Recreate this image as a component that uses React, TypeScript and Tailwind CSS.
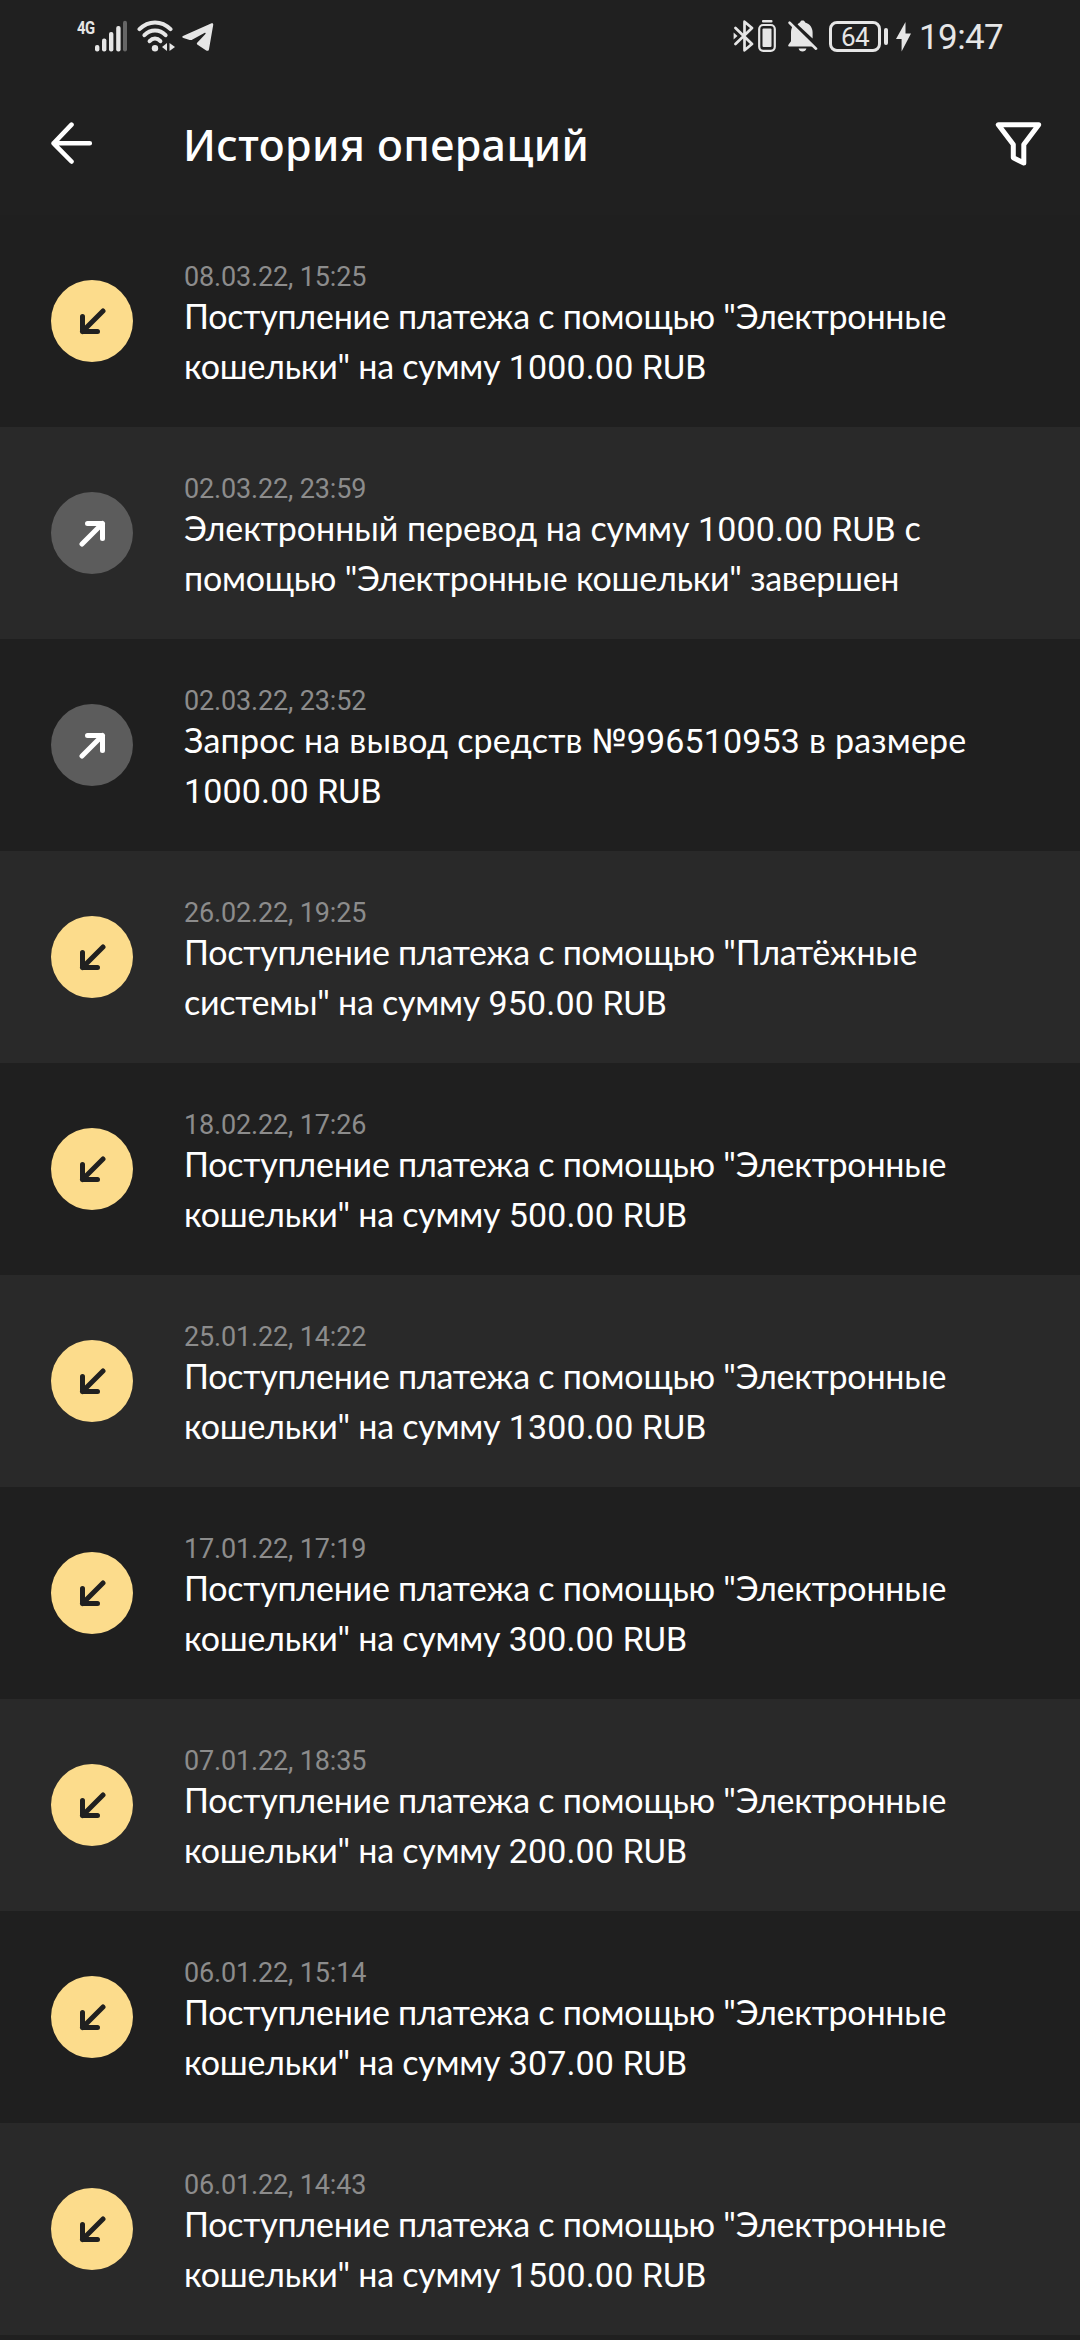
type Direction = 'in' | 'out';

interface Operation {
  date: string;
  lines: [string, string];
  direction: Direction;
  tracking?: string;
}

const OPERATIONS: Operation[] = [
  {
    date: '08.03.22, 15:25',
    lines: ['Поступление платежа с помощью "Электронные', 'кошельки" на сумму 1000.00 RUB'],
    direction: 'in',
  },
  {
    date: '02.03.22, 23:59',
    lines: ['Электронный перевод на сумму 1000.00 RUB с', 'помощью "Электронные кошельки" завершен'],
    direction: 'out',
    tracking: 'first:tracking-[-0.05px]',
  },
  {
    date: '02.03.22, 23:52',
    lines: ['Запрос на вывод средств №996510953 в размере', '1000.00 RUB'],
    direction: 'out',
    tracking: 'first:tracking-[0.2px]',
  },
  {
    date: '26.02.22, 19:25',
    lines: ['Поступление платежа с помощью "Платёжные', 'системы" на сумму 950.00 RUB'],
    direction: 'in',
  },
  {
    date: '18.02.22, 17:26',
    lines: ['Поступление платежа с помощью "Электронные', 'кошельки" на сумму 500.00 RUB'],
    direction: 'in',
  },
  {
    date: '25.01.22, 14:22',
    lines: ['Поступление платежа с помощью "Электронные', 'кошельки" на сумму 1300.00 RUB'],
    direction: 'in',
  },
  {
    date: '17.01.22, 17:19',
    lines: ['Поступление платежа с помощью "Электронные', 'кошельки" на сумму 300.00 RUB'],
    direction: 'in',
  },
  {
    date: '07.01.22, 18:35',
    lines: ['Поступление платежа с помощью "Электронные', 'кошельки" на сумму 200.00 RUB'],
    direction: 'in',
  },
  {
    date: '06.01.22, 15:14',
    lines: ['Поступление платежа с помощью "Электронные', 'кошельки" на сумму 307.00 RUB'],
    direction: 'in',
  },
  {
    date: '06.01.22, 14:43',
    lines: ['Поступление платежа с помощью "Электронные', 'кошельки" на сумму 1500.00 RUB'],
    direction: 'in',
  },
];

function SignalIcon() {
  return (
    <svg className="w-8 h-8 shrink-0" viewBox="0 0 32 32" fill="currentColor">
      <rect x="0" y="25" width="4.4" height="6.5" rx="2" />
      <rect x="7" y="18.5" width="4.4" height="13" rx="2" />
      <rect x="14" y="12" width="4.4" height="19.5" rx="2" />
      <rect x="21.2" y="6" width="4.4" height="25.5" rx="2" />
      <rect x="28" y="0.8" width="4" height="30.7" rx="2" fill="#666666" />
    </svg>
  );
}

function WifiIcon() {
  return (
    <svg className="w-[39px] h-8 shrink-0" viewBox="0 0 39 32" fill="none" stroke="currentColor" strokeWidth="4" strokeLinecap="round">
      <path d="M2.5 9.2C11.5 .2 24.5 .2 33.5 9.2" />
      <path d="M7.4 15.2c6-6.4 15.2-6.4 21.2 0" />
      <path d="M12.6 21.2c3.2-3.5 7.6-3.5 10.8 0" />
      <circle cx="18" cy="28.2" r="3.2" fill="currentColor" stroke="none" />
      <path d="M30 23v8l-5-4zM32.5 23v8l5.5-4z" fill="currentColor" stroke="none" />
    </svg>
  );
}

function TelegramIcon() {
  return (
    <svg className="w-8 h-[29px] shrink-0" viewBox="0 0 32 29" fill="currentColor">
      <path d="M1.5 12.8 29 .4c1.6-.6 2.4 0 2.2 1.600L27 26.200c-.3 1.700-1.400 2.100-2.800 1.200L15.600 21.800c-1-.8-1-1.400-.2-2.300l8-8.600c.7-1 0-1.600-1-.9L10.500 16.600c-1 .6-1.700.6-2.800.3L1.400 15c-1.600-.6-1.500-1.600.1-2.200z" />
    </svg>
  );
}

function BluetoothIcon() {
  return (
    <svg className="w-[22px] h-8 shrink-0" viewBox="0 0 22 32" fill="none" stroke="currentColor" strokeWidth="2.7" strokeLinejoin="round" strokeLinecap="round">
      <path d="M2.5 8 19 24l-7.5 6.3V1.7L19 8 2.5 24" />
      <path d="M.6 12.6 4.5 16 .6 19.4z" fill="currentColor" stroke="none" />
    </svg>
  );
}

function DeviceBatteryIcon() {
  return (
    <svg className="w-[18px] h-8 shrink-0" viewBox="0 0 18 32" fill="none">
      <rect x="4" y="0" width="10.5" height="2.4" rx="1" fill="currentColor" />
      <rect x="1.2" y="5" width="15.6" height="25.8" rx="4" stroke="currentColor" strokeWidth="2.2" />
      <rect x="4.5" y="8.6" width="9" height="18.4" rx="1" fill="currentColor" />
    </svg>
  );
}

function BellOffIcon() {
  return (
    <svg className="w-[30px] h-8 shrink-0" viewBox="0 0 30 32" fill="currentColor">
      <path d="M9.6 4.6C10.4 3.5 11 3 12 2.6 12.3 1 13.2.4 14.5.4S16.900 1 17.200 2.600C22 4 24.600 8 24.600 12.500V18.600z" />
      <path d="M4.5 6.2 25.5 26.6H1.600C0 26.600-.2 25.300.8 24.200l2.200-3V12.500C3 10 3.600 8 4.500 6.200z" />
      <path d="M10.6 28.6h7.8c-.4 2-1.900 3-3.900 3s-3.500-1-3.900-3z" />
      <path d="M1.6 2.7 28 28.7" stroke="currentColor" strokeWidth="2.6" strokeLinecap="round" />
    </svg>
  );
}

function BoltIcon() {
  return (
    <svg className="w-[15px] h-[30px] shrink-0" viewBox="0 0 15 30" fill="currentColor">
      <path d="M9.5 0v11.6H15L5.6 29.6V17H0z" />
    </svg>
  );
}

function StatusBar() {
  return (
    <div className="flex h-[72px] items-start justify-between px-[77px] pt-5 text-[#e6e6e6] font-['Roboto',sans-serif]">
      <div className="flex items-start">
        <span className="w-[18px] text-[19px] leading-[15px] font-bold tracking-[-0.5px]">
          <span className="inline-block origin-left scale-x-[0.78]">4G</span>
        </span>
        <SignalIcon />
        <div className="ml-[10px]"><WifiIcon /></div>
        <div className="ml-[6px] mt-[3px]"><TelegramIcon /></div>
      </div>
      <div className="flex items-start">
        <BluetoothIcon />
        <div className="ml-[3px]"><DeviceBatteryIcon /></div>
        <div className="ml-3"><BellOffIcon /></div>
        <div className="ml-[11px] mt-px flex h-[31px] w-[52px] items-center justify-center rounded-[8px] border-[3px] border-current text-[26px] leading-none tracking-[-0.5px]">
          64
        </div>
        <div className="ml-[3px] mt-2 h-[17px] w-1 rounded-full bg-current" />
        <div className="ml-2 mt-[2px]"><BoltIcon /></div>
        <span className="ml-[8px] w-[84px] text-[35px] leading-[36px] tracking-[-0.6px] whitespace-nowrap">19:47</span>
      </div>
    </div>
  );
}

function Header() {
  return (
    <header className="flex h-[143px] items-start pl-[51px] pr-[38px] text-white">
      <svg className="mt-[50px] w-[42px] h-[42px] shrink-0" viewBox="0 0 42 42" fill="none" stroke="currentColor" strokeWidth="4.6" strokeLinecap="round" strokeLinejoin="round">
        <path d="M20.5 2.7 2.6 21.3l17.9 18.2M2.6 21.3h36.2" />
      </svg>
      <h1 className="ml-[90px] mt-[43px] flex-1 text-[43px] leading-[60px] font-medium tracking-[0.4px] whitespace-nowrap font-['Noto_Sans',sans-serif]">История операций</h1>
      <svg className="mt-[49px] w-[47px] h-[45px] shrink-0" viewBox="0 0 47 45" fill="none" stroke="currentColor" strokeWidth="5" strokeLinejoin="round">
        <path d="M3.3 3.7h40.4L28.8 23.5v18.5L18.3 36.8V23.5z" />
      </svg>
    </header>
  );
}

function DirectionBadge({ direction }: { direction: Direction }) {
  const incoming = direction === 'in';

  return (
    <div className={`flex w-[82px] h-[82px] shrink-0 items-center justify-center rounded-full ${incoming ? 'bg-[#fcdc8c] text-[#202020]' : 'bg-[#5c5c5c] text-white'}`}>
      <svg className="w-[27px] h-[27px]" viewBox="0 0 27 27" fill="none" stroke="currentColor" strokeWidth="5" strokeLinecap="round" strokeLinejoin="round">
        <path d={incoming ? 'M24 3 3.5 23.5M3.5 8.5v15h15' : 'M3 24 23.5 3.5M8.5 3.5h15v15'} />
      </svg>
    </div>
  );
}

// Numbers and the currency code are set in Roboto, the rest of the line in Lato
function Line({ text, className = '' }: { text: string; className?: string }) {
  return (
    <span className={`block h-[50px] ${className}`}>
      {text.split(/(№?[\d.]+(?: RUB)?)/).map((part, i) =>
        i % 2 === 1 ? (
          <span key={i} className="font-['Roboto',sans-serif] leading-none tracking-[0.15px]">{part}</span>
        ) : (
          part
        )
      )}
    </span>
  );
}

function OperationRow({ date, lines, direction, tracking }: Operation) {
  return (
    <li className="flex h-[212px] items-center pl-[51px] odd:bg-[#1f1f1f] even:bg-[#292929]">
      <DirectionBadge direction={direction} />
      <div className="ml-[51px] h-[212px] pt-[48px]">
        <p className="text-[27px] leading-[28px] tracking-[-0.15px] text-[#8c8c8c] font-['Roboto',sans-serif]">{date}</p>
        <p className="text-[34px] leading-[50px] tracking-[-0.25px] text-white whitespace-nowrap">
          <Line text={lines[0]} className={tracking} />
          <Line text={lines[1]} />
        </p>
      </div>
    </li>
  );
}

export default function App() {
  return (
    <div className="w-[1080px] h-[2340px] overflow-hidden bg-[#202020] font-['Lato',sans-serif]">
      <StatusBar />
      <Header />
      <ul>
        {OPERATIONS.map((op) => (
          <OperationRow key={op.date} {...op} />
        ))}
      </ul>
    </div>
  );
}
